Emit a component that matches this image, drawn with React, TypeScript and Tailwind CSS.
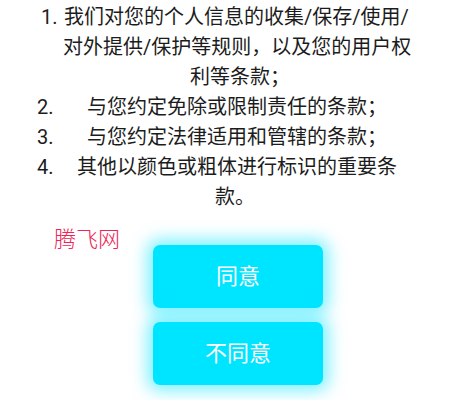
const font = { fontFamily: 'Roboto, "Noto Sans CJK SC", sans-serif' };

export default function App() {
  return (
    <div className="w-[456px] h-[400px] bg-white overflow-hidden" style={font}>
      <div className="pt-[2px] text-[20px] leading-[30px] text-[#1c1c1c] whitespace-nowrap">
        <div className="flex pl-[41px]">
          <span className="w-[23px]">1.</span>
          <span>我们对您的个人信息的收集/保存/使用/</span>
        </div>
        <div className="pl-[63px]">对外提供/保护等规则，以及您的用户权</div>
        <div className="pl-[190px]">利等条款；</div>
        <div className="flex pl-[37px]">
          <span className="w-[50px]">2.</span>
          <span>与您约定免除或限制责任的条款；</span>
        </div>
        <div className="flex pl-[37px]">
          <span className="w-[50px]">3.</span>
          <span>与您约定法律适用和管辖的条款；</span>
        </div>
        <div className="flex pl-[37px]">
          <span className="w-[40px]">4.</span>
          <span>其他以颜色或粗体进行标识的重要条</span>
        </div>
        <div className="pl-[215px]">款。</div>
      </div>

      <div className="flex">
        <div className="w-[153px] pl-[54px] pt-[13px]">
          <span className="text-[22px] leading-[30px] font-light text-[#ee2456]">腾飞网</span>
        </div>
        <div className="flex flex-col gap-[14px] pt-[33px]">
          <button className="w-[170px] h-[63px] rounded-[7px] bg-[#00e5ff] shadow-[0_0_16px_6px_rgba(0,229,255,0.5)] text-white text-[22px]">
            同意
          </button>
          <button className="w-[170px] h-[63px] rounded-[7px] bg-[#00e5ff] shadow-[0_0_16px_6px_rgba(0,229,255,0.5)] text-white text-[22px]">
            不同意
          </button>
        </div>
      </div>
    </div>
  );
}
